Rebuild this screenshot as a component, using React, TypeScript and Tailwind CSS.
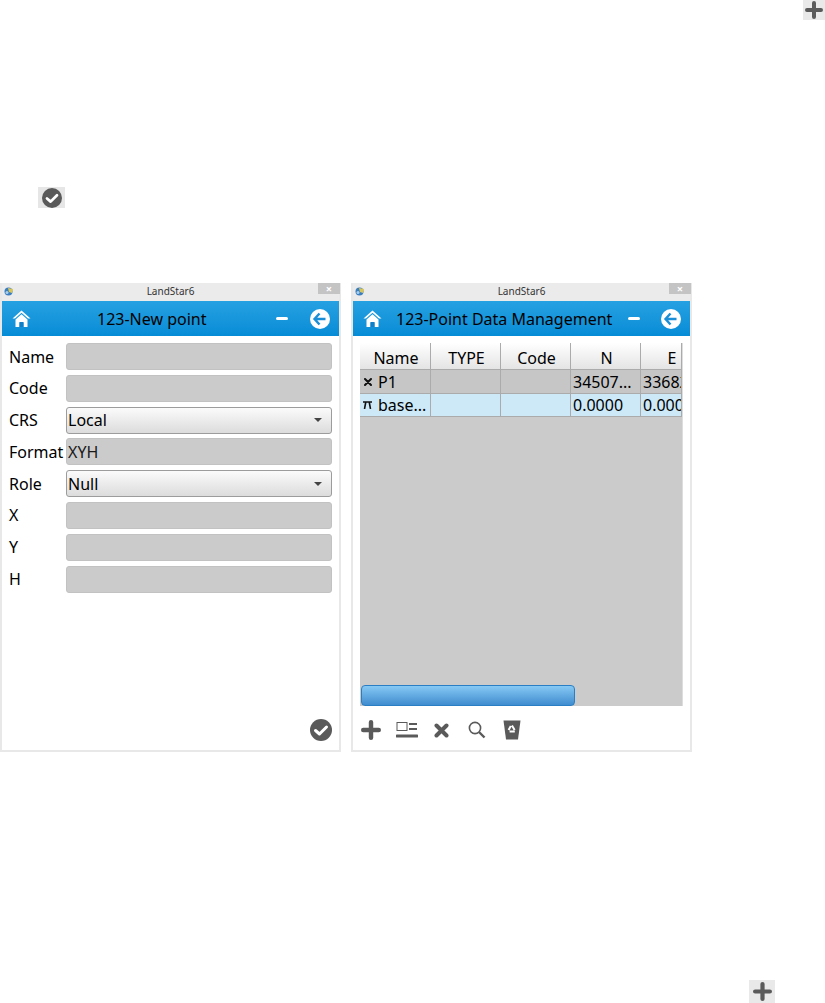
const font = { fontFamily: '"Noto Sans", "Open Sans", sans-serif' };

function Plus({ size = 18, color = "#5a5a5a" }: { size?: number; color?: string }) {
  return (
    <svg width={size} height={size} viewBox="0 0 18 18">
      <path d="M9 2v14M2 9h14" stroke={color} strokeWidth="4" strokeLinecap="round" />
    </svg>
  );
}

function Check({ size = 22 }: { size?: number }) {
  return (
    <svg width={size} height={size} viewBox="0 0 22 22">
      <circle cx="11" cy="11" r="11" fill="#5a5a5a" />
      <path d="M5.5 11.5l4 3.5 7-7" fill="none" stroke="#fff" strokeWidth="3" strokeLinecap="round" strokeLinejoin="round" />
    </svg>
  );
}

function Home() {
  return (
    <svg width="19" height="17" viewBox="0 0 19 17">
      <path d="M9.5 0.5L0.5 8.5h2.5L9.5 2.8 16 8.5h2.5z" fill="#fff" />
      <path d="M3.5 9.5L9.5 4.2l6 5.3V17H11.5v-4.5h-4V17H3.5z" fill="#fff" />
      <rect x="7.5" y="12" width="4" height="5" fill="#0f7fc8" />
    </svg>
  );
}

function Back() {
  return (
    <svg width="20" height="20" viewBox="0 0 20 20">
      <circle cx="10" cy="10" r="10" fill="#fff" />
      <path d="M9.5 4.5L4.5 10l5 5.5M5 10h10.5" fill="none" stroke="#1a8fd8" strokeWidth="2.4" />
    </svg>
  );
}

function AppLogo() {
  return (
    <svg width="10" height="9" viewBox="0 0 10 9">
      <circle cx="4.5" cy="4.5" r="4" fill="#3c7fc0" />
      <path d="M4 1l5 1-1 4-3-1z" fill="#d9c65a" />
      <circle cx="3" cy="5.5" r="1.5" fill="#a8d0ee" />
    </svg>
  );
}

function Window({ title, left, children, center }: { title: string; left: number; center: boolean; children: React.ReactNode }) {
  return (
    <div className="flex h-[469px] w-[341px] flex-col border-x-2 border-b-2 border-[#e8e8e8] bg-white" style={{ marginLeft: left }}>
      <div className="relative flex h-[18px] shrink-0 items-center justify-center bg-[#ebebeb] text-[10px] text-[#333333]">
        <span className="absolute left-[2px] top-[4px]"><AppLogo /></span>
        <span className="relative top-[-1px]">{title}</span>
        <span className="absolute right-[-1px] top-0 flex h-[11px] w-[22px] items-center justify-center bg-[#c4c4c4] text-[11px] font-bold leading-none text-white">×</span>
      </div>
      <div className="flex h-[35px] shrink-0 items-center bg-gradient-to-b from-[#25a1e2] to-[#058cd6] pl-[10px] pr-[9px]">
        <Home />
        <div className="flex-1 pl-[14px] text-[16px] text-black">
          {center ? <span className="relative left-[52px]">123-New point</span> : "123-Point Data Management"}
        </div>
        <div className={center ? "mr-[22px] h-[3px] w-[12px] rounded-sm bg-white" : "mr-[21px] h-[3px] w-[12px] rounded-sm bg-white"} />
        <Back />
      </div>
      {children}
    </div>
  );
}

function Input({ value }: { value?: string }) {
  return (
    <div className="flex h-[27px] w-[266px] items-center rounded-[3px] border border-[#c2c2c2] bg-[#cbcbcb] pl-[1px] text-[16px] text-[#1a1a1a]">
      {value}
    </div>
  );
}

function Select({ value }: { value: string }) {
  return (
    <div className="flex h-[27px] w-[266px] items-center justify-between rounded-[3px] border border-[#9c9c9c] bg-gradient-to-b from-[#fbfbfb] to-[#dcdcdc] pl-[1px] pr-[9px] text-[16px] text-black">
      {value}
      <span className="h-0 w-0 border-x-[4px] border-t-[4px] border-x-transparent border-t-[#444444]" />
    </div>
  );
}

const fields: { label: string; kind: "input" | "select"; value?: string }[] = [
  { label: "Name", kind: "input" },
  { label: "Code", kind: "input" },
  { label: "CRS", kind: "select", value: "Local" },
  { label: "Format", kind: "input", value: "XYH" },
  { label: "Role", kind: "select", value: "Null" },
  { label: "X", kind: "input" },
  { label: "Y", kind: "input" },
  { label: "H", kind: "input" },
];

function NewPoint() {
  return (
    <div className="flex flex-1 flex-col px-[7px] pt-[7px]">
      <div className="flex flex-col gap-[4.8px]">
        {fields.map((f) => (
          <div key={f.label} className="flex items-center">
            <span className="w-[57px] text-[16px] leading-none text-black">{f.label}</span>
            {f.kind === "input" ? <Input value={f.value} /> : <Select value={f.value ?? ""} />}
          </div>
        ))}
      </div>
      <div className="mt-auto mb-[9px] flex justify-end">
        <Check />
      </div>
    </div>
  );
}

const cols = [71, 70, 70, 70, 41];
const headers = ["Name", "TYPE", "Code", "N", "E"];

function Cell({ w, children, center, bg, h }: { w: number; children?: React.ReactNode; center?: boolean; bg: string; h: number }) {
  return (
    <div
      className={`flex shrink-0 items-center overflow-hidden whitespace-nowrap border-r border-b border-[#ababab] pl-[2px] text-[16px] text-black ${bg} ${center ? "justify-center" : ""}`}
      style={{ width: w, height: h }}
    >
      {children}
    </div>
  );
}

function PointData() {
  return (
    <div className="flex flex-1 flex-col pl-[7px] pr-[7px] pt-[7px]">
      <div className="relative flex h-[363px] w-[323px] flex-col overflow-hidden border-r border-[#dddddd] bg-[#cbcbcb]">
        <div className="flex">
          {headers.map((h, i) => (
            <Cell key={h} w={cols[i]} h={27} center bg="bg-gradient-to-b from-white to-[#e4e4e4]">
              <span className={h === "E" ? "relative left-[10px] top-[2px]" : "relative top-[2px]"}>{h}</span>
            </Cell>
          ))}
        </div>
        <div className="flex">
          <Cell w={cols[0]} h={24} bg="bg-[#c6c6c6]">
            <svg className="ml-[2px] mr-[6px] shrink-0" width="8" height="8" viewBox="0 0 8 8">
              <path d="M1 1l6 6M7 1L1 7" stroke="#111111" strokeWidth="2" strokeLinecap="round" />
            </svg>
            P1
          </Cell>
          <Cell w={cols[1]} h={24} bg="bg-[#c6c6c6]" />
          <Cell w={cols[2]} h={24} bg="bg-[#c6c6c6]" />
          <Cell w={cols[3]} h={24} bg="bg-[#c6c6c6]">34507...</Cell>
          <Cell w={cols[4]} h={24} bg="bg-[#c6c6c6]">33682</Cell>
        </div>
        <div className="flex">
          <Cell w={cols[0]} h={23} bg="bg-[#cde9f8]">
            <svg className="ml-[1px] mr-[6px] shrink-0" width="9" height="8" viewBox="0 0 9 8">
              <path d="M0 1h9M2.7 1.5L1.5 8M6.3 1.5L7.5 8" stroke="#111111" strokeWidth="1.6" fill="none" />
            </svg>
            base...
          </Cell>
          <Cell w={cols[1]} h={23} bg="bg-[#cde9f8]" />
          <Cell w={cols[2]} h={23} bg="bg-[#cde9f8]" />
          <Cell w={cols[3]} h={23} bg="bg-[#cde9f8]">0.0000</Cell>
          <Cell w={cols[4]} h={23} bg="bg-[#cde9f8]">0.0000</Cell>
        </div>
        <div className="mt-auto ml-[1px] h-[21px] w-[214px] rounded-[4px] border border-[#2a7fc4] bg-gradient-to-b from-[#86c9f4] to-[#3f8ccf]" />
      </div>
      <div className="mt-[14px] flex items-center gap-[15px] pl-[1px]">
        <Plus size={20} />
        <svg width="22" height="16" viewBox="0 0 22 16" fill="none">
          <rect x="1" y="0.5" width="10" height="8" stroke="#5a5a5a" />
          <path d="M13 2h8M13 7h8" stroke="#5a5a5a" strokeWidth="2" />
          <path d="M1 14h20" stroke="#5a5a5a" strokeWidth="3" strokeLinecap="round" />
        </svg>
        <svg className="ml-[1px]" width="15" height="15" viewBox="0 0 15 15">
          <path d="M2.5 2.5l10 10M12.5 2.5l-10 10" stroke="#5a5a5a" strokeWidth="4" strokeLinecap="round" />
        </svg>
        <svg className="ml-[4px]" width="18" height="18" viewBox="0 0 18 18" fill="none">
          <circle cx="7" cy="7" r="5.6" stroke="#5a5a5a" strokeWidth="1.6" />
          <path d="M11 11l5.5 5.5" stroke="#5a5a5a" strokeWidth="2.4" />
        </svg>
        <svg className="ml-[2px]" width="18" height="20" viewBox="0 0 18 20">
          <path d="M0.5 0.5h17L15 19.5H3z" fill="#5a5a5a" />
          <path d="M9 5.5l2.6 4.5M11.8 11.5H6.6M5.6 10l2.2-4" fill="none" stroke="#fff" strokeWidth="2" />
        </svg>
      </div>
    </div>
  );
}

export default function App() {
  return (
    <div className="relative h-[1003px] w-[825px] overflow-hidden bg-white" style={font}>
      <div className="flex h-[187px] items-start justify-end">
        <div className="flex h-[20px] w-[22px] items-center justify-center bg-[#e9e9e9]"><Plus size={18} /></div>
      </div>
      <div className="ml-[38px] flex h-[21px] w-[27px] items-center justify-center bg-[#e6e6e6]"><Check size={20} /></div>
      <div className="mt-[75px] flex">
        <Window title="LandStar6" left={0} center>
          <NewPoint />
        </Window>
        <Window title="LandStar6" left={10} center={false}>
          <PointData />
        </Window>
      </div>
      <div className="mt-[228px] ml-[749px] flex h-[23px] w-[26px] items-center justify-center bg-[#e9e9e9]"><Plus size={19} /></div>
    </div>
  );
}
